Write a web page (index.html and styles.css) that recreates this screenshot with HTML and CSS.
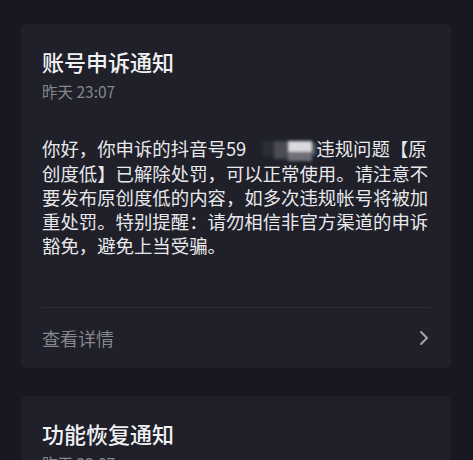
FILE: index.html
```html
<!DOCTYPE html>
<html lang="zh-CN">
<head>
    <meta charset="UTF-8">
    <meta name="viewport" content="width=device-width, initial-scale=1.0">
    <title>系统通知</title>
    <link rel="stylesheet" href="styles.css">
</head>
<body>

    <div class="list">
        <div class="card">
            <div class="title">账号申诉通知</div>
            <div class="time">昨天 23:07</div>
            <div class="content">你好，你申诉的抖音号59<span class="mask"></span>违规问题【原创度低】已解除处罚，可以正常使用。请注意不要发布原创度低的内容，如多次违规帐号将被加重处罚。特别提醒：请勿相信非官方渠道的申诉豁免，避免上当受骗。</div>
            <div class="more">
                <span>查看详情</span>
                <svg class="arrow" width="12" height="16" viewBox="0 0 12 16">
                    <path d="M3 2 L9 8 L3 14" fill="none" stroke="#a3a4ab" stroke-width="2" stroke-linecap="round" stroke-linejoin="round"/>
                </svg>
            </div>
        </div>

        <div class="card">
            <div class="title">功能恢复通知</div>
            <div class="time">昨天 23:07</div>
        </div>
    </div>

</body>
</html>
```

FILE: styles.css
```css
body {
    margin: 0;
    background-color: #171821;
    font-family: "Noto Sans CJK SC", "Noto Sans", sans-serif;
    height: 460px;
    overflow: hidden;
}
.list {
    display: flex;
    flex-direction: column;
    gap: 28px;
    padding: 24px 22px 0 21px;
}
.card {
    background-color: #1f2029;
    border-radius: 6px;
    padding: 22px 21px 0;
}
.title {
    font-size: 22px;
    line-height: 30px;
    font-weight: 500;
    color: #f1f1f3;
}
.time {
    margin-top: 5px;
    font-size: 15.5px;
    line-height: 20px;
    color: #86878e;
}
.content {
    margin-top: 35px;
    font-size: 18.4px;
    line-height: 24px;
    color: #e9e9ec;
}
.mask {
    display: inline-block;
    width: 70px;
    height: 24px;
    vertical-align: -5px;
    filter: blur(1.5px);
    background:
        linear-gradient(#d9d9de, #d9d9de) 42px 4px / 24px 11px no-repeat,
        linear-gradient(#6e6f78, #6e6f78) 42px 15px / 24px 9px no-repeat,
        linear-gradient(#4a4b55, #4a4b55) 28px 4px / 14px 18px no-repeat,
        linear-gradient(#2c2d37, #2c2d37) 16px 4px / 12px 16px no-repeat,
        linear-gradient(#55565f, #55565f) 66px 6px / 4px 12px no-repeat;
}
.more {
    margin-top: 50px;
    height: 60px;
    border-top: 1px solid #2b2c36;
    display: flex;
    align-items: center;
    justify-content: space-between;
    font-size: 18px;
    color: #85868d;
}
.arrow {
    margin-right: 0;
}
```
